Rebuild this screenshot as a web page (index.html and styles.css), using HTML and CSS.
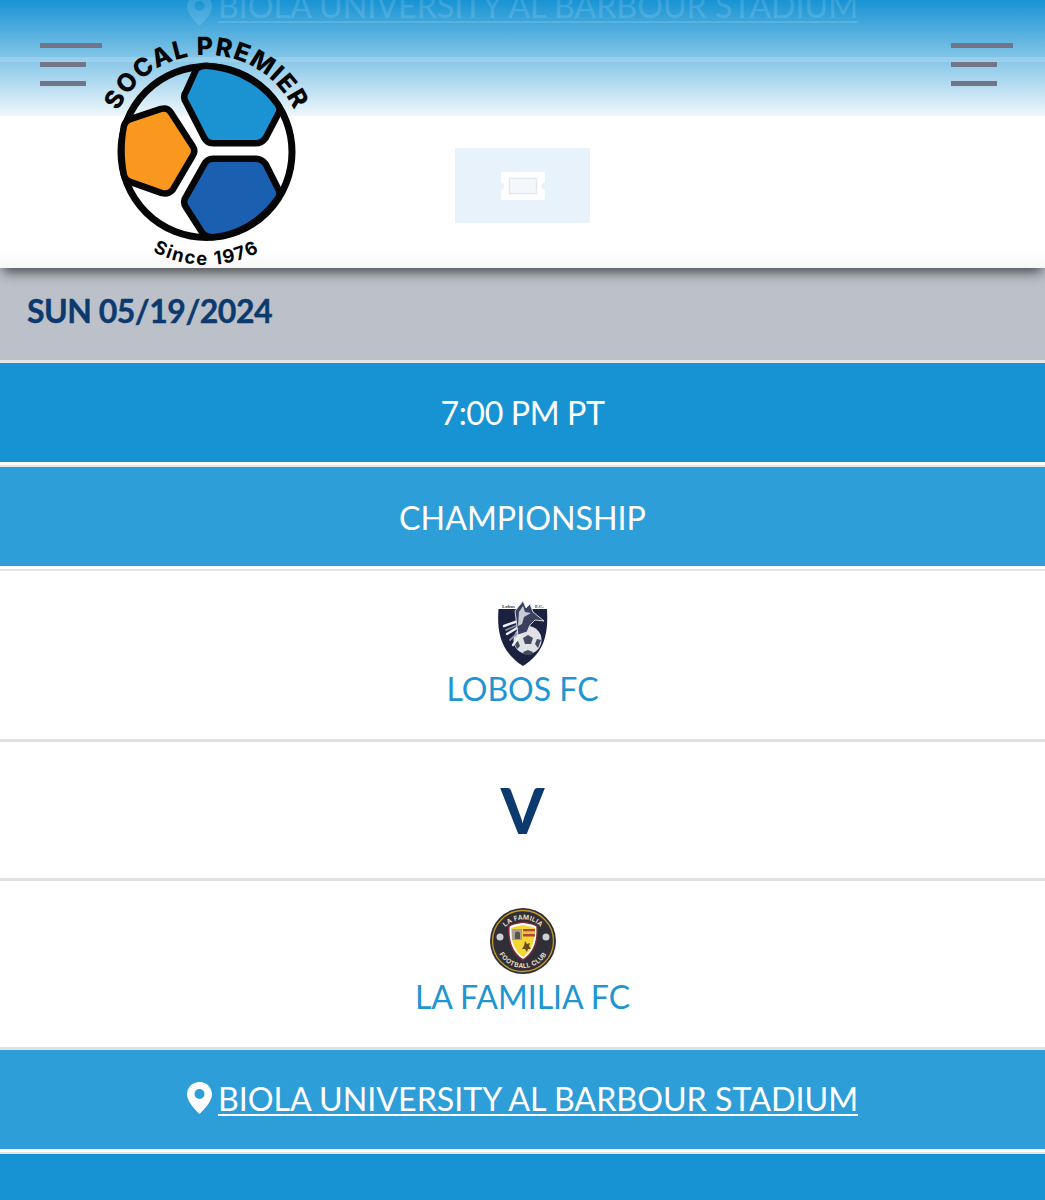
FILE: index.html
```html
<!DOCTYPE html>
<html lang="en">
<head>
<meta charset="utf-8">
<title>SoCal Premier - Match</title>
<link rel="stylesheet" href="styles.css">
</head>
<body>
<div class="page">
  <header class="site-header">
    <div class="ghost-venue">
      <svg class="pin" viewBox="0 0 25 32"><path fill-rule="evenodd" d="M12.500 0C5.600 0 0 5.500 0 12.300 0 20 9 28.600 12.500 32 16 28.600 25 20 25 12.300 25 5.500 19.400 0 12.500 0Zm0 7a5 5 0 1 1 0 10 5 5 0 0 1 0-10Z"/></svg>
      <span class="venue-link">BIOLA UNIVERSITY AL BARBOUR STADIUM</span>
    </div>
    <div class="header-top">
      <div class="burger"><i class="bar-long"></i><i></i><i></i></div>
      <div class="burger"><i class="bar-long"></i><i></i><i></i></div>
    </div>
    <div class="header-main">
      <a class="ticket-btn" href="#" aria-label="Tickets">
        <svg class="ticket" viewBox="0 0 44 28"><path fill="#fff" d="M2 0h40a2 2 0 0 1 2 2v8.500a3.500 3.500 0 0 0 0 7V26a2 2 0 0 1-2 2H2a2 2 0 0 1-2-2v-8.500a3.500 3.500 0 0 0 0-7V2a2 2 0 0 1 2-2Z"/><rect x="8.500" y="6.500" width="27" height="15" fill="#f4f8fc" stroke="#dfe9f2" stroke-width="1.500"/></svg>
      </a>
    </div>
    <svg class="logo" viewBox="0 0 230 240" role="img" aria-label="SoCal Premier since 1976">
      <defs>
        <path id="arcTop" d="M10.500 124a97 97 0 0 1 194 0" fill="none"/>
        <path id="arcBottom" d="M32.500 208.500a113 113 0 0 0 150 0" fill="none"/>
      </defs>
      <text class="logo-top"><textPath href="#arcTop" startOffset="50%" text-anchor="middle">SOCAL PREMIER</textPath></text>
      <circle class="ring" cx="107.500" cy="124" r="85.500"/>
      <g class="panels">
        <path class="panel-blue" d="M100 43Q103 41 107 41C135 43 160 56 175 77Q179 81 176 85L164 108Q161 112 157 112H114Q110 112 108 108L90 73Q87 69 90 65Z"/>
        <path class="panel-orange" d="M33 94L63 84Q67 83 69 86L91 120Q93 123 91 126L71 160Q68 163 64 162L33 151Q29 150 28 146C25 130 25 114 28 99Q29 95 33 94Z"/>
        <path class="panel-navy" d="M114 134H157Q161 134 164 138L176 162Q179 166 175 170C160 191 137 204 113 206Q109 206 106 203L90 178Q87 174 90 170L108 138Q110 134 114 134Z"/>
      </g>
      <text class="logo-since"><textPath href="#arcBottom" startOffset="50%" text-anchor="middle">Since 1976</textPath></text>
    </svg>
  </header>

  <div class="row date-row">SUN 05/19/2024</div>
  <div class="row band band-dark time">7:00 PM PT</div>
  <div class="row band band-light champ">CHAMPIONSHIP</div>

  <div class="row team team-first">
    <svg class="crest crest-lobos" viewBox="0 0 51 68">
      <path fill="#1b2240" d="M1.500 10H50C51 30 50 52 26 67 2 52 0 30 1.500 10Z"/>
      <text class="crest-tiny" x="5" y="8.500">Lobos</text>
      <text class="crest-tiny" x="38" y="8.500">F.C.</text>
      <circle cx="30.500" cy="41" r="14" fill="#dfe1e7"/>
      <path fill="#454b5f" d="M31 36l5 3-2 6h-6l-2-6ZM17 43l4-1 2 5-3 3ZM44 41l-4-1-2 5 3 4ZM26 53l5-2 5 2-2 3h-6Z"/>
      <g class="lobos-mane">
        <path class="mane-light" d="M24 21L7 27M25 26L10 35"/>
        <path class="mane-mid" d="M25 24L9 31M26 29L13 41"/>
        <path class="mane-light" d="M27 31L16 46"/>
      </g>
      <path fill="#3a415e" stroke="#e4e6ec" stroke-width=".9" d="M18 12L26 2l3 7 4-4 3 8 11 9-9-1-5 5-3 7-9 3Z"/>
      <path fill="#c7cbd6" d="M22 13l4-6 2 6 6 1-7 4-2 7-4 2Z"/>
    </svg>
    <a class="team-name" href="#">LOBOS FC</a>
  </div>

  <div class="row versus">V</div>

  <div class="row team team-second">
    <svg class="crest crest-familia" viewBox="0 0 66 66">
      <defs>
        <path id="famTop" d="M8.500 36a24.500 24.500 0 0 1 49 0" fill="none"/>
        <path id="famBottom" d="M6 33a27 27 0 0 0 54 0" fill="none"/>
      </defs>
      <circle cx="33" cy="33" r="33" fill="#2f2f35"/>
      <circle cx="33" cy="33" r="30.500" fill="none" stroke="#c49a2c" stroke-width="1.300"/>
      <text class="fam-text"><textPath href="#famTop" startOffset="50%" text-anchor="middle">LA FAMILIA</textPath></text>
      <text class="fam-text"><textPath href="#famBottom" startOffset="50%" text-anchor="middle">FOOTBALL CLUB</textPath></text>
      <circle cx="10" cy="29" r="3.500" fill="#cfd0d2"/>
      <circle cx="56" cy="29" r="3.500" fill="#cfd0d2"/>
      <path fill="#fff" stroke="#7b2a3c" stroke-width="1.600" d="M33 14C39 15 44 16 47 18 48 30 46 44 33 52 20 44 18 30 19 18 22 16 27 15 33 14Z"/>
      <path fill="#f5d637" d="M33 17C38 18 42 19 45 20 45 30 43 42 33 49 23 42 21 30 21 20 24 19 28 18 33 17Z"/>
      <path fill="#a8a294" d="M22 21H32V32H22Z"/>
      <path fill="#5a5348" d="M25 31V26a2.500 2.500 0 0 1 5 0V31Z"/>
      <path fill="#b5443a" d="M33 21H45V23.500H33ZM33 26H45V28.500H33Z"/>
      <path fill="#e8c23a" d="M33 23.500H45V26H33Z"/>
      <path fill="#6b4a1c" d="M35 33l2 3 3-1-1 3 2 3-3 0-1 3-2-3-3 0 2-3Z"/>
    </svg>
    <a class="team-name" href="#">LA FAMILIA FC</a>
  </div>

  <div class="row band band-light venue">
    <svg class="pin" viewBox="0 0 25 32"><path fill-rule="evenodd" d="M12.500 0C5.600 0 0 5.500 0 12.300 0 20 9 28.600 12.500 32 16 28.600 25 20 25 12.300 25 5.500 19.400 0 12.500 0Zm0 7a5 5 0 1 1 0 10 5 5 0 0 1 0-10Z"/></svg>
    <a class="venue-link" href="#">BIOLA UNIVERSITY AL BARBOUR STADIUM</a>
  </div>
  <div class="row band-dark tail"></div>
</div>
</body>
</html>
```

FILE: styles.css
```css
* { box-sizing: border-box; }
html, body { margin: 0; padding: 0; background: #fff; }
body { font-family: "Lato", "Liberation Sans", sans-serif; color: #fff; }
.page { width: 1045px; height: 1200px; overflow: hidden; display: flex; flex-direction: column; }
a { color: inherit; }

.site-header {
  position: relative;
  z-index: 2;
  flex: none;
  height: 268px;
  background: linear-gradient(#fff 0, #fff 250px, #f7f7f7 268px);
  box-shadow: 0 7px 12px -3px rgba(0, 0, 0, .65);
}
.header-top {
  height: 116px;
  padding: 43px 32px 0 40px;
  display: flex;
  justify-content: space-between;
  background:
    linear-gradient(transparent 57px, rgba(255, 255, 255, .16) 57px, rgba(255, 255, 255, .16) 62px, transparent 62px),
    linear-gradient(#1793d3 0, #eff7fb 100%);
}
.burger { width: 62px; display: flex; flex-direction: column; gap: 14px; }
.burger i { display: block; width: 46px; height: 5px; background: #727589; }
.burger .bar-long { width: 62px; }
.header-main { height: 152px; display: flex; justify-content: center; padding-top: 32px; }
.ticket-btn {
  width: 135px;
  height: 75px;
  background: #e8f2fa;
  display: flex;
  align-items: center;
  justify-content: center;
}
.ticket { width: 44px; height: 28px; }

.ghost-venue {
  position: absolute;
  z-index: 1;
  top: 0;
  left: 0;
  right: 0;
  height: 26px;
  overflow: hidden;
  display: flex;
  align-items: flex-end;
  justify-content: center;
  gap: 6px;
  font-size: 32.200px;
  line-height: 40px;
  color: #fff;
  opacity: .13;
}
.pin { width: 25px; height: 32px; flex: none; fill: #fff; }
.venue-link { text-decoration: underline; text-decoration-thickness: 2px; text-underline-offset: 3px; white-space: nowrap; }

.logo { position: absolute; z-index: 2; left: 99px; top: 28px; width: 230px; height: 240px; }
.logo-top { font: 800 25px "Inter", "Liberation Sans", sans-serif; letter-spacing: 1.300px; fill: #060606; }
.logo-since { font: 700 18.500px "Inter", "Liberation Sans", sans-serif; letter-spacing: 1.500px; fill: #060606; }
.ring { fill: none; stroke: #060606; stroke-width: 7; }
.panels path { stroke: #060606; stroke-width: 13; stroke-linejoin: round; paint-order: stroke; }
.panel-blue { fill: #1b93d3; }
.panel-orange { fill: #f9971f; }
.panel-navy { fill: #1b5fb0; }

.row { flex: none; width: 100%; }
.date-row {
  height: 95px;
  padding: 0 0 8px 27px;
  display: flex;
  align-items: center;
  background: #bcc1c9;
  border-bottom: 3px solid #e3e4e6;
  color: #0c3a6e;
  font-size: 32px;
  font-weight: 700;
  letter-spacing: -.5px;
  -webkit-text-stroke: .4px #0c3a6e;
}
.band {
  display: flex;
  align-items: center;
  justify-content: center;
  font-size: 32.200px;
  height: 104px;
  border-bottom: 2px solid #e3e5e8;
  box-shadow: inset 0 -3px 0 #fff;
}
.time { letter-spacing: -.4px; padding-bottom: 4px; }
.champ { padding-bottom: 2px; }
.band-dark { background: #1793d3; }
.band-light { background: #2e9ed8; }

.team {
  display: flex;
  flex-direction: column;
  align-items: center;
  background: #fff;
  border-bottom: 3px solid #e0e1e3;
  color: #1f95d2;
  font-size: 32px;
}
.team-first { height: 171px; padding-top: 28px; gap: 2px; }
.team-second { height: 169px; padding-top: 27px; gap: 3px; }
.team-name { text-decoration: none; line-height: 40px; }
.crest { display: block; flex: none; }
.crest-lobos { width: 51px; height: 68px; }
.crest-familia { width: 66px; height: 66px; }
.crest-tiny { font: 700 5px "Liberation Serif", serif; fill: #33384d; }
.lobos-mane path { fill: none; stroke-linecap: round; }
.mane-light { stroke: #eceef2; stroke-width: 2.400; }
.mane-mid { stroke: #8a92a8; stroke-width: 1.800; }
.fam-text { font: 700 6.500px "Inter", "Liberation Sans", sans-serif; fill: #e4dcc4; letter-spacing: .3px; }

.versus {
  height: 139px;
  display: flex;
  align-items: center;
  justify-content: center;
  background: #fff;
  border-bottom: 3px solid #e0e1e3;
  color: #0c3a6e;
  font-size: 62px;
  font-weight: 900;
}
.venue { gap: 6px; padding-bottom: 6px; }
.tail { height: 47px; }
```
